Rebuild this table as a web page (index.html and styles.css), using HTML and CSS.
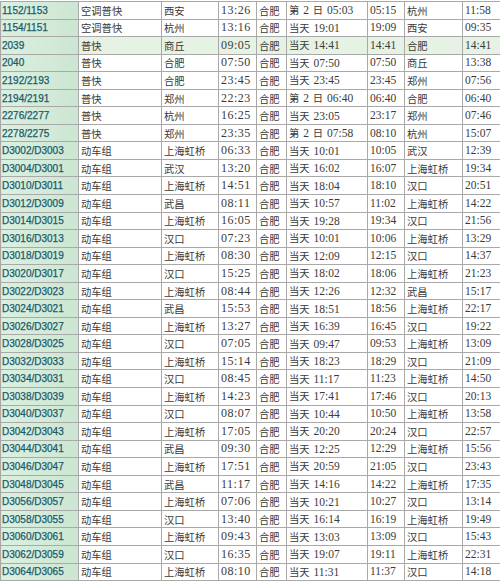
FILE: index.html
```html
<!DOCTYPE html>
<html lang="zh">
<head>
<meta charset="utf-8">
<title>合肥站列车时刻表</title>
<link rel="stylesheet" href="styles.css">
</head>
<body>
<table class="tt">
<colgroup>
<col class="c1"><col class="c2"><col class="c3"><col class="c4"><col class="c5"><col class="c6"><col class="c7"><col class="c8"><col class="c9">
</colgroup>
<tbody>
<tr><td class="no">1152/1153</td><td class="zh">空调普快</td><td class="zh">西安</td><td class="dep">13:26</td><td class="zh">合肥</td><td class="arr"><span class="zh">第</span> 2 <span class="zh">日</span> 05:03</td><td class="tm">05:15</td><td class="zh">杭州</td><td class="tm">11:58</td></tr>
<tr><td class="no">1154/1151</td><td class="zh">空调普快</td><td class="zh">杭州</td><td class="dep">13:16</td><td class="zh">合肥</td><td class="arr"><span class="zh">当天</span> 19:01</td><td class="tm">19:09</td><td class="zh">西安</td><td class="tm">09:35</td></tr>
<tr class="hl"><td class="no">2039</td><td class="zh">普快</td><td class="zh">商丘</td><td class="dep">09:05</td><td class="zh">合肥</td><td class="arr"><span class="zh">当天</span> 14:41</td><td class="tm">14:41</td><td class="zh">合肥</td><td class="tm">14:41</td></tr>
<tr><td class="no">2040</td><td class="zh">普快</td><td class="zh">合肥</td><td class="dep">07:50</td><td class="zh">合肥</td><td class="arr"><span class="zh">当天</span> 07:50</td><td class="tm">07:50</td><td class="zh">商丘</td><td class="tm">13:38</td></tr>
<tr><td class="no">2192/2193</td><td class="zh">普快</td><td class="zh">合肥</td><td class="dep">23:45</td><td class="zh">合肥</td><td class="arr"><span class="zh">当天</span> 23:45</td><td class="tm">23:45</td><td class="zh">郑州</td><td class="tm">07:56</td></tr>
<tr><td class="no">2194/2191</td><td class="zh">普快</td><td class="zh">郑州</td><td class="dep">22:23</td><td class="zh">合肥</td><td class="arr"><span class="zh">第</span> 2 <span class="zh">日</span> 06:40</td><td class="tm">06:40</td><td class="zh">合肥</td><td class="tm">06:40</td></tr>
<tr><td class="no">2276/2277</td><td class="zh">普快</td><td class="zh">杭州</td><td class="dep">16:25</td><td class="zh">合肥</td><td class="arr"><span class="zh">当天</span> 23:05</td><td class="tm">23:17</td><td class="zh">郑州</td><td class="tm">07:46</td></tr>
<tr><td class="no">2278/2275</td><td class="zh">普快</td><td class="zh">郑州</td><td class="dep">23:35</td><td class="zh">合肥</td><td class="arr"><span class="zh">第</span> 2 <span class="zh">日</span> 07:58</td><td class="tm">08:10</td><td class="zh">杭州</td><td class="tm">15:07</td></tr>
<tr><td class="no">D3002/D3003</td><td class="zh">动车组</td><td class="zh">上海虹桥</td><td class="dep">06:33</td><td class="zh">合肥</td><td class="arr"><span class="zh">当天</span> 10:01</td><td class="tm">10:05</td><td class="zh">武汉</td><td class="tm">12:39</td></tr>
<tr><td class="no">D3004/D3001</td><td class="zh">动车组</td><td class="zh">武汉</td><td class="dep">13:20</td><td class="zh">合肥</td><td class="arr"><span class="zh">当天</span> 16:02</td><td class="tm">16:07</td><td class="zh">上海虹桥</td><td class="tm">19:34</td></tr>
<tr><td class="no">D3010/D3011</td><td class="zh">动车组</td><td class="zh">上海虹桥</td><td class="dep">14:51</td><td class="zh">合肥</td><td class="arr"><span class="zh">当天</span> 18:04</td><td class="tm">18:10</td><td class="zh">汉口</td><td class="tm">20:51</td></tr>
<tr><td class="no">D3012/D3009</td><td class="zh">动车组</td><td class="zh">武昌</td><td class="dep">08:11</td><td class="zh">合肥</td><td class="arr"><span class="zh">当天</span> 10:57</td><td class="tm">11:02</td><td class="zh">上海虹桥</td><td class="tm">14:22</td></tr>
<tr><td class="no">D3014/D3015</td><td class="zh">动车组</td><td class="zh">上海虹桥</td><td class="dep">16:05</td><td class="zh">合肥</td><td class="arr"><span class="zh">当天</span> 19:28</td><td class="tm">19:34</td><td class="zh">汉口</td><td class="tm">21:56</td></tr>
<tr><td class="no">D3016/D3013</td><td class="zh">动车组</td><td class="zh">汉口</td><td class="dep">07:23</td><td class="zh">合肥</td><td class="arr"><span class="zh">当天</span> 10:01</td><td class="tm">10:06</td><td class="zh">上海虹桥</td><td class="tm">13:29</td></tr>
<tr><td class="no">D3018/D3019</td><td class="zh">动车组</td><td class="zh">上海虹桥</td><td class="dep">08:30</td><td class="zh">合肥</td><td class="arr"><span class="zh">当天</span> 12:09</td><td class="tm">12:15</td><td class="zh">汉口</td><td class="tm">14:37</td></tr>
<tr><td class="no">D3020/D3017</td><td class="zh">动车组</td><td class="zh">汉口</td><td class="dep">15:25</td><td class="zh">合肥</td><td class="arr"><span class="zh">当天</span> 18:02</td><td class="tm">18:06</td><td class="zh">上海虹桥</td><td class="tm">21:23</td></tr>
<tr><td class="no">D3022/D3023</td><td class="zh">动车组</td><td class="zh">上海虹桥</td><td class="dep">08:44</td><td class="zh">合肥</td><td class="arr"><span class="zh">当天</span> 12:26</td><td class="tm">12:32</td><td class="zh">武昌</td><td class="tm">15:17</td></tr>
<tr><td class="no">D3024/D3021</td><td class="zh">动车组</td><td class="zh">武昌</td><td class="dep">15:53</td><td class="zh">合肥</td><td class="arr"><span class="zh">当天</span> 18:51</td><td class="tm">18:56</td><td class="zh">上海虹桥</td><td class="tm">22:17</td></tr>
<tr><td class="no">D3026/D3027</td><td class="zh">动车组</td><td class="zh">上海虹桥</td><td class="dep">13:27</td><td class="zh">合肥</td><td class="arr"><span class="zh">当天</span> 16:39</td><td class="tm">16:45</td><td class="zh">汉口</td><td class="tm">19:22</td></tr>
<tr><td class="no">D3028/D3025</td><td class="zh">动车组</td><td class="zh">汉口</td><td class="dep">07:05</td><td class="zh">合肥</td><td class="arr"><span class="zh">当天</span> 09:47</td><td class="tm">09:53</td><td class="zh">上海虹桥</td><td class="tm">13:09</td></tr>
<tr><td class="no">D3032/D3033</td><td class="zh">动车组</td><td class="zh">上海虹桥</td><td class="dep">15:14</td><td class="zh">合肥</td><td class="arr"><span class="zh">当天</span> 18:23</td><td class="tm">18:29</td><td class="zh">汉口</td><td class="tm">21:09</td></tr>
<tr><td class="no">D3034/D3031</td><td class="zh">动车组</td><td class="zh">汉口</td><td class="dep">08:45</td><td class="zh">合肥</td><td class="arr"><span class="zh">当天</span> 11:17</td><td class="tm">11:23</td><td class="zh">上海虹桥</td><td class="tm">14:50</td></tr>
<tr><td class="no">D3038/D3039</td><td class="zh">动车组</td><td class="zh">上海虹桥</td><td class="dep">14:23</td><td class="zh">合肥</td><td class="arr"><span class="zh">当天</span> 17:41</td><td class="tm">17:46</td><td class="zh">汉口</td><td class="tm">20:13</td></tr>
<tr><td class="no">D3040/D3037</td><td class="zh">动车组</td><td class="zh">汉口</td><td class="dep">08:07</td><td class="zh">合肥</td><td class="arr"><span class="zh">当天</span> 10:44</td><td class="tm">10:50</td><td class="zh">上海虹桥</td><td class="tm">13:58</td></tr>
<tr><td class="no">D3042/D3043</td><td class="zh">动车组</td><td class="zh">上海虹桥</td><td class="dep">17:05</td><td class="zh">合肥</td><td class="arr"><span class="zh">当天</span> 20:20</td><td class="tm">20:24</td><td class="zh">汉口</td><td class="tm">22:57</td></tr>
<tr><td class="no">D3044/D3041</td><td class="zh">动车组</td><td class="zh">武昌</td><td class="dep">09:30</td><td class="zh">合肥</td><td class="arr"><span class="zh">当天</span> 12:25</td><td class="tm">12:29</td><td class="zh">上海虹桥</td><td class="tm">15:56</td></tr>
<tr><td class="no">D3046/D3047</td><td class="zh">动车组</td><td class="zh">上海虹桥</td><td class="dep">17:51</td><td class="zh">合肥</td><td class="arr"><span class="zh">当天</span> 20:59</td><td class="tm">21:05</td><td class="zh">汉口</td><td class="tm">23:43</td></tr>
<tr><td class="no">D3048/D3045</td><td class="zh">动车组</td><td class="zh">武昌</td><td class="dep">11:17</td><td class="zh">合肥</td><td class="arr"><span class="zh">当天</span> 14:16</td><td class="tm">14:22</td><td class="zh">上海虹桥</td><td class="tm">17:35</td></tr>
<tr><td class="no">D3056/D3057</td><td class="zh">动车组</td><td class="zh">上海虹桥</td><td class="dep">07:06</td><td class="zh">合肥</td><td class="arr"><span class="zh">当天</span> 10:21</td><td class="tm">10:27</td><td class="zh">汉口</td><td class="tm">13:14</td></tr>
<tr><td class="no">D3058/D3055</td><td class="zh">动车组</td><td class="zh">汉口</td><td class="dep">13:40</td><td class="zh">合肥</td><td class="arr"><span class="zh">当天</span> 16:14</td><td class="tm">16:19</td><td class="zh">上海虹桥</td><td class="tm">19:49</td></tr>
<tr><td class="no">D3060/D3061</td><td class="zh">动车组</td><td class="zh">上海虹桥</td><td class="dep">09:43</td><td class="zh">合肥</td><td class="arr"><span class="zh">当天</span> 13:03</td><td class="tm">13:09</td><td class="zh">汉口</td><td class="tm">15:43</td></tr>
<tr><td class="no">D3062/D3059</td><td class="zh">动车组</td><td class="zh">汉口</td><td class="dep">16:35</td><td class="zh">合肥</td><td class="arr"><span class="zh">当天</span> 19:07</td><td class="tm">19:11</td><td class="zh">上海虹桥</td><td class="tm">22:31</td></tr>
<tr><td class="no">D3064/D3065</td><td class="zh">动车组</td><td class="zh">上海虹桥</td><td class="dep">08:10</td><td class="zh">合肥</td><td class="arr"><span class="zh">当天</span> 11:31</td><td class="tm">11:37</td><td class="zh">汉口</td><td class="tm">14:18</td></tr>
</tbody>
</table>
</body>
</html>
```

FILE: styles.css
```css
html, body {
  margin: 0;
  padding: 0;
  background: #ffffff;
}

.tt {
  width: 500px;
  table-layout: fixed;
  border-collapse: collapse;
  margin-top: 1px;
  color: #3a3a3a;
}

.c1 { width: 78px; }
.c2 { width: 83px; }
.c3 { width: 57px; }
.c4 { width: 38px; }
.c5 { width: 30px; }
.c6 { width: 81px; }
.c7 { width: 37px; }
.c8 { width: 58px; }
.c9 { width: 38px; }

.tt tr {
  height: 17.55px;
}

.tt td {
  border: 1px solid #a9a9a9;
  padding: 0 0 0 2px;
  white-space: nowrap;
  overflow: hidden;
  line-height: 15px;
  vertical-align: middle;
  font-family: "Liberation Serif", "Noto Sans CJK SC", serif;
  font-size: 11.5px;
}

.tt td.dep {
  font-size: 12px;
  letter-spacing: 0.5px;
}

.tt td.no {
  background: linear-gradient(to right, #dcf0e0, #cce6d2);
  color: #1b5a6b;
  font-family: "Liberation Sans", sans-serif;
  font-size: 10px;
  padding-left: 1px;
  -webkit-text-stroke: 0.25px #1b5a6b;
}

.tt td.zh,
.tt .arr .zh {
  font-family: "Noto Sans CJK SC", sans-serif;
  font-size: 10.3px;
  font-weight: 400;
}

.tt td.arr {
  font-family: "Liberation Serif", "Noto Sans CJK SC", serif;
  font-size: 11.5px;
  word-spacing: 1px;
}

.tt tr.hl td {
  background: #e6f2e4;
}

.tt tr.hl td.no {
  background: linear-gradient(to right, #dcf0e0, #cce6d2);
}
```
